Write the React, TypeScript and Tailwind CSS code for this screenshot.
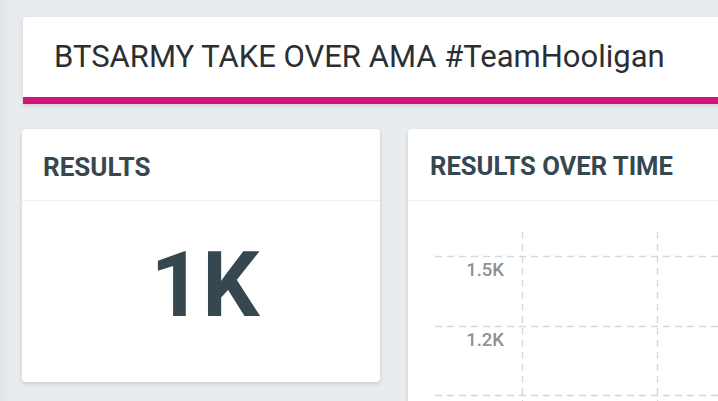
import React from "react";

function Chart() {
  const hLines = [257, 327, 396];
  const vLines = [522, 657];
  return (
    <svg width="330" height="200" viewBox="408 202 330 200" className="block">
      {hLines.map((y) => (
        <line key={y} x1={435} x2={738} y1={y + 0.5} y2={y + 0.5} stroke="#d4d7da" strokeWidth={1.3} strokeDasharray="7 5" />
      ))}
      {vLines.map((x) => (
        <line key={x} x1={x + 0.5} x2={x + 0.5} y1={233} y2={402} stroke="#d4d7da" strokeWidth={1.3} strokeDasharray="7 5" />
      ))}
      <text x={504} y={277} textAnchor="end" fill="#8c9196" fontSize="18.5" fontWeight={500} fontFamily="Roboto, sans-serif">1.5K</text>
      <text x={504} y={347} textAnchor="end" fill="#8c9196" fontSize="18.5" fontWeight={500} fontFamily="Roboto, sans-serif">1.2K</text>
    </svg>
  );
}

export default function App() {
  return (
    <div className="w-[718px] h-[401px] overflow-hidden bg-[#e9ecef] flex" style={{ fontFamily: "Roboto, 'Liberation Sans', sans-serif" }}>
      <div className="w-[9px] shrink-0 h-full bg-gradient-to-r from-[#e1e4e7] to-[#e9ecef]" />
      <div className="flex-1 min-w-0 pl-[13px] pt-[17px] flex flex-col">
        <div className="ml-[1px] w-[720px] h-[87px] shrink-0 bg-white border-b-[7px] border-[#d5147b] rounded-t-[3px] shadow-[0_2px_4px_rgba(0,0,0,0.12)] flex items-center pl-[31px]">
          <span className="text-[31px] text-[#2b2f33] leading-none whitespace-nowrap pb-[1px]">BTSARMY TAKE OVER AMA #TeamHooligan</span>
        </div>
        <div className="mt-[25px] flex gap-[28px]">
          <div className="w-[358px] h-[253px] shrink-0 bg-white rounded-[4px] shadow-[0_2px_4px_rgba(0,0,0,0.14)] flex flex-col">
            <div className="h-[72px] border-b border-[#eef0f2] flex items-center pl-[21px] pt-[5px]">
              <span className="text-[26px] font-bold text-[#37474f] leading-none">RESULTS</span>
            </div>
            <div className="flex-1 flex items-center justify-center pb-[12px] pl-[8px]">
              <span className="text-[90px] font-bold text-[#37474f] leading-none">1K</span>
            </div>
          </div>
          <div className="w-[340px] h-[300px] shrink-0 bg-white rounded-[4px] shadow-[0_2px_4px_rgba(0,0,0,0.14)] flex flex-col">
            <div className="h-[72px] border-b border-[#eef0f2] flex items-center pl-[22px] pt-[5px]">
              <span className="text-[25.6px] font-bold text-[#37474f] leading-none whitespace-nowrap">RESULTS OVER TIME</span>
            </div>
            <Chart />
          </div>
        </div>
      </div>
    </div>
  );
}
